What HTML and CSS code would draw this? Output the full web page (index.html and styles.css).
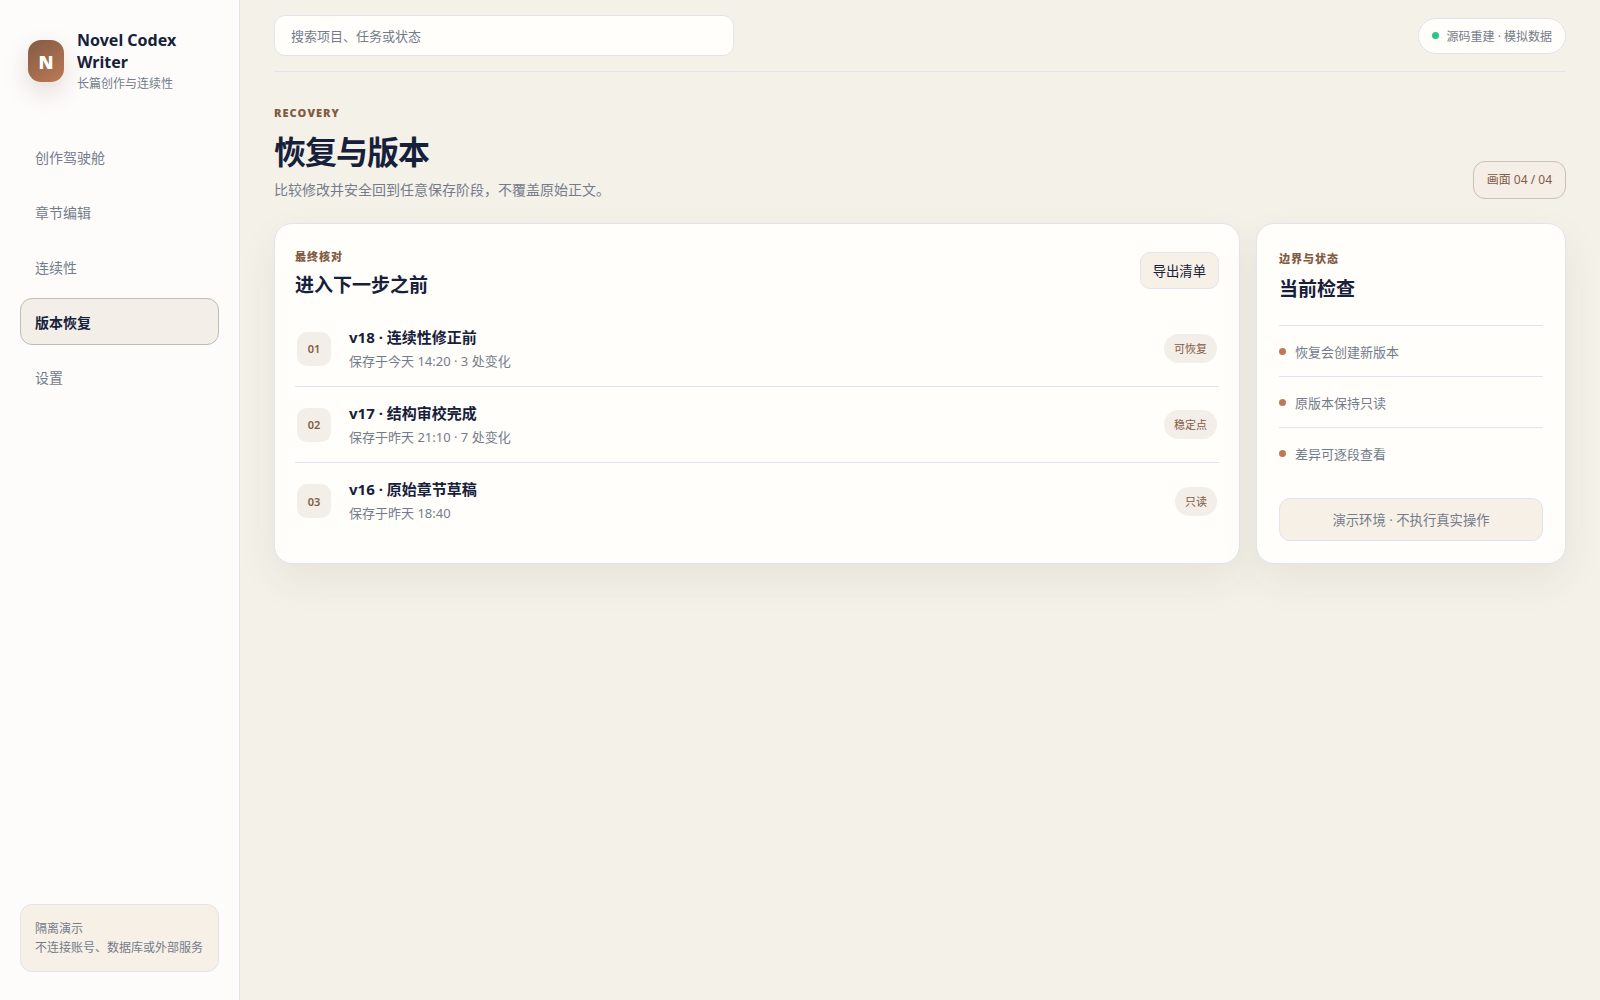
FILE: index.html
```html
<!DOCTYPE html>
<html lang="zh-CN">
<head>
    <meta charset="UTF-8">
    <meta name="viewport" content="width=device-width, initial-scale=1.0">
    <title>Novel Codex Writer</title>
    <link rel="stylesheet" href="styles.css">
</head>
<body>
    <div class="app">
        <aside class="sidebar">
            <div class="brand">
                <span class="brand-mark">N</span>
                <div class="brand-text">
                    <strong>Novel Codex Writer</strong>
                    <small>长篇创作与连续性</small>
                </div>
            </div>

            <nav class="nav">
                <button type="button">创作驾驶舱</button>
                <button type="button">章节编辑</button>
                <button type="button">连续性</button>
                <button type="button" class="active">版本恢复</button>
                <button type="button">设置</button>
            </nav>

            <div class="side-note">
                隔离演示<br>
                不连接账号、数据库或外部服务
            </div>
        </aside>

        <main class="main">
            <header class="topbar">
                <input class="search" type="search" placeholder="搜索项目、任务或状态" aria-label="搜索项目、任务或状态">
                <span class="status"><i class="status-dot"></i>源码重建 · 模拟数据</span>
            </header>

            <section class="page-head">
                <div>
                    <p class="eyebrow">RECOVERY</p>
                    <h1>恢复与版本</h1>
                    <p class="lead">比较修改并安全回到任意保存阶段，不覆盖原始正文。</p>
                </div>
                <span class="screen-count">画面 04 / 04</span>
            </section>

            <div class="content">
                <section class="card">
                    <div class="card-head">
                        <div>
                            <p class="eyebrow">最终核对</p>
                            <h2>进入下一步之前</h2>
                        </div>
                        <button type="button" class="export">导出清单</button>
                    </div>
                    <ul class="versions">
                        <li>
                            <span class="num">01</span>
                            <div class="info">
                                <strong>v18 · 连续性修正前</strong>
                                <small>保存于今天 14:20 · 3 处变化</small>
                            </div>
                            <span class="tag">可恢复</span>
                        </li>
                        <li>
                            <span class="num">02</span>
                            <div class="info">
                                <strong>v17 · 结构审校完成</strong>
                                <small>保存于昨天 21:10 · 7 处变化</small>
                            </div>
                            <span class="tag">稳定点</span>
                        </li>
                        <li>
                            <span class="num">03</span>
                            <div class="info">
                                <strong>v16 · 原始章节草稿</strong>
                                <small>保存于昨天 18:40</small>
                            </div>
                            <span class="tag">只读</span>
                        </li>
                    </ul>
                </section>

                <aside class="card checks">
                    <p class="eyebrow">边界与状态</p>
                    <h2>当前检查</h2>
                    <ul>
                        <li>恢复会创建新版本</li>
                        <li>原版本保持只读</li>
                        <li>差异可逐段查看</li>
                    </ul>
                    <button type="button" class="demo">演示环境 · 不执行真实操作</button>
                </aside>
            </div>
        </main>
    </div>
</body>
</html>
```
FILE: styles.css
```css
:root {
    --ink: #17203a;
    --muted: #747c8c;
    --line: #e1e3ed;
    --brown: #825b43;
    --accent: #bd7956;
    --paper: #fffefa;
    --sand: #f7f0e6;
    --soft: #f3eee8;
}
* {
    box-sizing: border-box;
}
body {
    margin: 0;
    font-family: "Noto Sans", "Noto Sans CJK SC", sans-serif;
    color: var(--ink);
    background: #f4f1e9;
}
h1, h2, p, ul {
    margin: 0;
    padding: 0;
}
ul {
    list-style: none;
}
button, input {
    font-family: inherit;
}
button {
    cursor: pointer;
}
.app {
    display: grid;
    grid-template-columns: 240px minmax(0, 1fr);
    min-height: 100vh;
}

/* sidebar */
.sidebar {
    display: flex;
    flex-direction: column;
    padding: 28px 20px;
    background: #fdfcfb;
    border-right: 1px solid var(--line);
}
.brand {
    display: flex;
    align-items: center;
    gap: 13px;
    padding: 0 8px;
    margin-bottom: 40px;
}
.brand-mark {
    display: grid;
    place-items: center;
    flex: none;
    width: 36px;
    height: 42px;
    padding-top: 2px;
    border-radius: 13px;
    background: linear-gradient(145deg, #825b43, #bd7956);
    box-shadow: 0 10px 24px rgba(130, 91, 67, 0.2);
    color: #fff;
    font-family: "Open Sans", sans-serif;
    font-size: 18px;
    font-weight: 800;
}
.brand-text {
    padding-top: 1px;
}
.brand strong {
    display: block;
    font-size: 16px;
    line-height: 22px;
}
.brand small {
    display: block;
    margin-top: 2px;
    font-size: 12px;
    line-height: 18px;
    color: var(--muted);
}
.nav {
    display: grid;
    gap: 8px;
}
.nav button {
    height: 47px;
    padding: 0 14px;
    border: 1px solid transparent;
    border-radius: 12px;
    background: transparent;
    color: var(--muted);
    font-size: 14px;
    text-align: left;
}
.nav button.active {
    background: var(--soft);
    border-color: #bfbcb8;
    color: var(--ink);
    font-weight: 700;
}
.side-note {
    margin-top: auto;
    padding: 14px;
    border: 1px solid var(--line);
    border-radius: 12px;
    background: var(--sand);
    color: var(--muted);
    font-size: 12px;
    line-height: 19px;
}

/* main column */
.main {
    padding: 0 34px 40px;
}
.topbar {
    display: flex;
    align-items: center;
    justify-content: space-between;
    height: 72px;
    border-bottom: 1px solid var(--line);
}
.search {
    width: 460px;
    height: 41px;
    padding: 0 16px;
    border: 1px solid var(--line);
    border-radius: 11px;
    background: var(--paper);
    color: var(--ink);
    font-size: 13px;
}
.search::placeholder {
    color: var(--muted);
}
.status {
    display: flex;
    align-items: center;
    gap: 8px;
    height: 36px;
    padding: 0 13px;
    border: 1px solid var(--line);
    border-radius: 18px;
    background: var(--paper);
    color: var(--muted);
    font-size: 12px;
}
.status-dot {
    width: 7px;
    height: 7px;
    border-radius: 50%;
    background: #2bc48a;
}
.page-head {
    display: flex;
    align-items: flex-end;
    justify-content: space-between;
    padding: 32px 0 24px;
}
.eyebrow {
    color: var(--brown);
    font-family: "Open Sans", "Noto Sans CJK SC", sans-serif;
    font-size: 11px;
    font-weight: 800;
    line-height: 18px;
    letter-spacing: 1px;
}
h1 {
    margin: 8px 0 6px;
    font-size: 32px;
    line-height: 44px;
    letter-spacing: -1px;
}
h2 {
    font-size: 19px;
    line-height: 28px;
}
.lead {
    color: var(--muted);
    font-size: 14px;
    line-height: 19px;
}
.screen-count {
    padding: 9px 13px;
    border: 1px solid #c8c0b9;
    border-radius: 12px;
    background: #f4eee7;
    color: var(--brown);
    font-size: 12px;
    line-height: 18px;
}

/* cards */
.content {
    display: grid;
    grid-template-columns: minmax(0, 1fr) 310px;
    gap: 16px;
}
.card {
    padding: 20px;
    border: 1px solid var(--line);
    border-radius: 18px;
    background: var(--paper);
    box-shadow: 0 16px 40px rgba(70, 60, 40, 0.07);
}
.card-head {
    display: flex;
    align-items: flex-start;
    justify-content: space-between;
    padding: 4px 0 12px;
}
.card-head .eyebrow {
    margin-bottom: 5px;
}
.export, .demo {
    border: 1px solid var(--line);
    background: var(--sand);
}
.export {
    height: 37px;
    margin-top: 4px;
    padding: 0 12px;
    border-radius: 10px;
    color: var(--ink);
}
.versions li {
    display: flex;
    align-items: center;
    gap: 18px;
    height: 76px;
    padding: 0 2px;
    border-bottom: 1px solid var(--line);
}
.versions li:last-child {
    border-bottom: none;
}
.num {
    display: grid;
    place-items: center;
    width: 34px;
    height: 34px;
    border-radius: 10px;
    background: var(--soft);
    color: var(--brown);
    font-size: 11px;
    font-weight: 600;
}
.info {
    flex: 1;
}
.info strong {
    display: block;
    font-size: 15px;
    line-height: 24px;
}
.info small {
    display: block;
    color: var(--muted);
    font-size: 13px;
    line-height: 24px;
}
.tag {
    padding: 6px 10px;
    border-radius: 15px;
    background: var(--soft);
    color: var(--brown);
    font-size: 11px;
    line-height: 17px;
}
.checks {
    display: flex;
    flex-direction: column;
    padding: 22px;
}
.checks .eyebrow {
    margin: 4px 0 7px;
}
.checks ul {
    margin: 22px 0 20px;
}
.checks li {
    display: flex;
    align-items: center;
    gap: 9px;
    height: 51px;
    border-top: 1px solid var(--line);
    color: var(--muted);
    font-size: 13px;
}
.checks li::before {
    content: "";
    width: 7px;
    height: 7px;
    border-radius: 50%;
    background: var(--accent);
}
.demo {
    height: 43px;
    margin-top: auto;
    border-radius: 11px;
    color: var(--muted);
}
```
